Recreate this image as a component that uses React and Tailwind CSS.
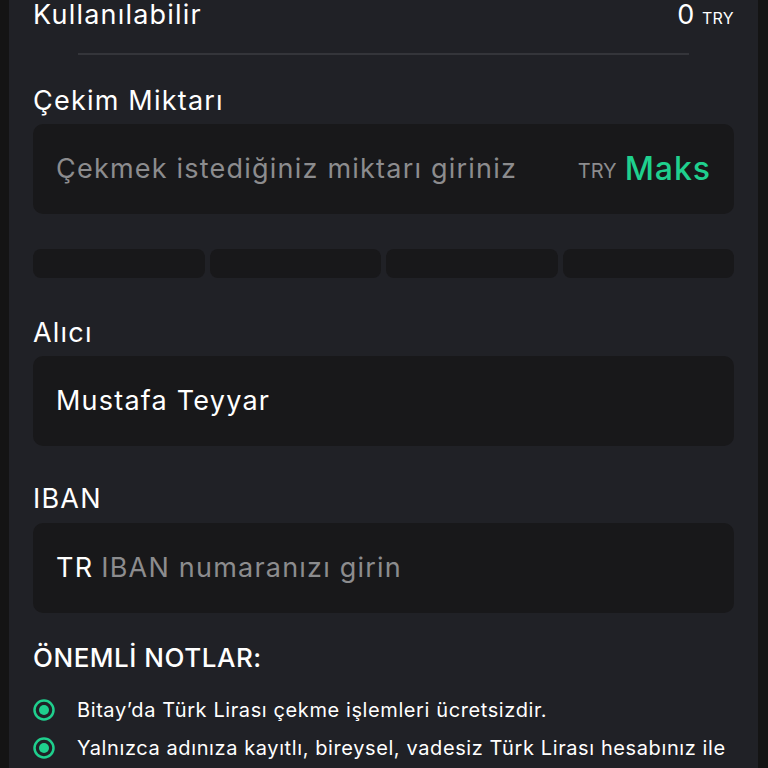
import React from 'react';

const font = { fontFamily: 'Inter, "Open Sans", sans-serif' };

const Radio = () => (
  <svg width="24" height="24" viewBox="0 0 24 24" className="shrink-0">
    <circle cx="12" cy="12" r="9.5" fill="none" stroke="#1fcf8d" strokeWidth="2.5" />
    <circle cx="12" cy="12" r="5" fill="#1fcf8d" />
  </svg>
);

const Field = ({ children }) => (
  <div className="h-[90px] rounded-[10px] bg-[#18181a] px-[23px] flex items-center">{children}</div>
);

const App = () => {
  const chips = [0, 1, 2, 3];
  return (
    <div className="h-[768px] overflow-hidden bg-[#141414] pl-[9px] pr-[10px]" style={font}>
      <div className="h-full flex flex-col bg-[#202126] px-[24px] text-white">
        {/* bakiye */}
        <div className="-mt-[5px] flex items-baseline justify-between h-[40px]">
          <span className="text-[27px] leading-[40px] tracking-[0.045em]">Kullanılabilir</span>
          <span className="text-[27px] leading-[40px]">
            0 <span className="text-[16px] tracking-[0.02em]">TRY</span>
          </span>
        </div>
        <div className="mx-[45px] mt-[18px] h-[2px] bg-[#34353a]"></div>

        {/* çekim miktarı */}
        <div className="mt-[28px] text-[27px] leading-[36px] tracking-[0.045em]">Çekim Miktarı</div>
        <div className="mt-[5px]">
          <Field>
            <span className="flex-1 text-[27px] tracking-[0.045em] text-[#8c8c8e] whitespace-nowrap">Çekmek istediğiniz miktarı giriniz</span>
            <span className="text-[20px] text-[#8c8c8e] mr-[8px] mt-[4px]">TRY</span>
            <span className="text-[32px] tracking-[0.03em] text-[#1fd08e] font-medium">Maks</span>
          </Field>
        </div>
        <div className="mt-[35px] grid grid-cols-4 gap-[5px]">
          {chips.map(c => (
            <div key={c} className="h-[29px] rounded-[8px] bg-[#18181a]"></div>
          ))}
        </div>

        {/* alıcı */}
        <div className="mt-[37px] text-[27px] leading-[36px] tracking-[0.045em]">Alıcı</div>
        <div className="mt-[5px]">
          <Field>
            <span className="text-[27px] tracking-[0.045em]">Mustafa Teyyar</span>
          </Field>
        </div>

        {/* iban */}
        <div className="mt-[35px] text-[27px] leading-[36px] tracking-[0.045em]">IBAN</div>
        <div className="mt-[6px]">
          <Field>
            <span className="text-[27px] tracking-[0.045em]">TR</span>
            <span className="ml-[8px] text-[27px] tracking-[0.045em] text-[#8c8c8e]">IBAN numaranızı girin</span>
          </Field>
        </div>

        {/* notlar */}
        <div className="mt-[27px] text-[26px] leading-[36px] font-medium tracking-[0.02em]">ÖNEMLİ NOTLAR:</div>
        <ul className="mt-[22px] flex flex-col gap-[14px]">
          <li className="flex items-center gap-[21px] text-[20px] leading-[24px] tracking-[0.03em] -ml-[1px]">
            <Radio />
            <span>Bitay’da Türk Lirası çekme işlemleri ücretsizdir.</span>
          </li>
          <li className="flex items-center gap-[21px] text-[20px] leading-[24px] tracking-[0.03em] -ml-[1px]">
            <Radio />
            <span className="whitespace-nowrap">Yalnızca adınıza kayıtlı, bireysel, vadesiz Türk Lirası hesabınız ile</span>
          </li>
        </ul>
      </div>
    </div>
  );
};

export default App;
